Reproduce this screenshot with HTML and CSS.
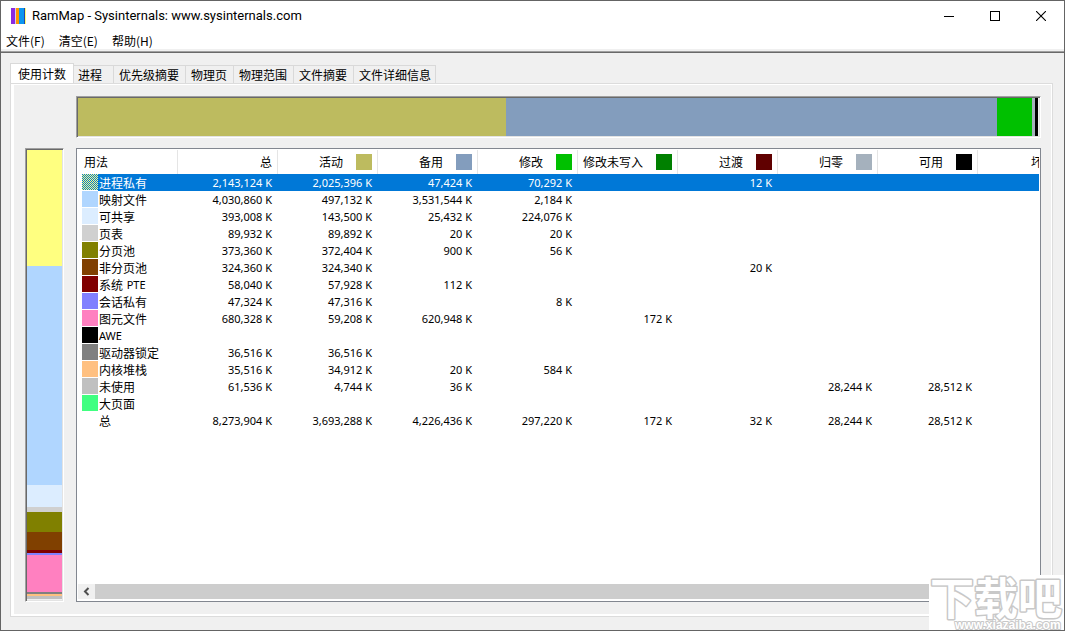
FILE: index.html
```html
<!DOCTYPE html>
<html lang="zh-CN">
<head>
<meta charset="utf-8">
<title>RamMap - Sysinternals: www.sysinternals.com</title>
<link rel="stylesheet" href="styles.css">
</head>
<body>
<div class="window">
  <header class="titlebar">
    <svg class="app-icon" width="16" height="16" viewBox="0 0 16 16" shape-rendering="crispEdges" aria-hidden="true">
      <path fill="#8a2be2" d="M0 0h4v16H0z"/><path fill="#ff9800" d="M5 0h3v16H5z"/><path fill="#d8c8f0" d="M4 0h1v16H4z"/><path fill="#0c96f0" d="M8 0h5v16H8z"/><path fill="#2344a8" d="M13 0h1v16h-1z"/><path fill="#ffff70" d="M14 0h1v16h-1z"/>
    </svg>
    <h1 class="title">RamMap - Sysinternals: www.sysinternals.com</h1>
    <div class="window-buttons">
      <button class="window-button" aria-label="最小化"><svg width="10" height="10" shape-rendering="crispEdges"><path d="M0 5.5h10" stroke="#000"/></svg></button>
      <button class="window-button" aria-label="最大化"><svg width="10" height="10" shape-rendering="crispEdges"><path d="M.5 .5h9v9h-9z" fill="none" stroke="#000"/></svg></button>
      <button class="window-button" aria-label="关闭"><svg width="10" height="10"><path d="M0 0l10 10M10 0L0 10" stroke="#000" stroke-width="1.1"/></svg></button>
    </div>
  </header>
  <nav class="menubar">
    <button class="menu">文件(F)</button>
    <button class="menu">清空(E)</button>
    <button class="menu">帮助(H)</button>
  </nav>
  <main class="client">
    <div class="tabs" role="tablist">
      <button class="tab tab-active" role="tab" aria-selected="true">使用计数</button>
      <button class="tab tab-process" role="tab">进程</button>
      <button class="tab" role="tab">优先级摘要</button>
      <button class="tab" role="tab">物理页</button>
      <button class="tab" role="tab">物理范围</button>
      <button class="tab" role="tab">文件摘要</button>
      <button class="tab" role="tab">文件详细信息</button>
    </div>
    <section class="panel">
      <div class="bar state-bar">
        <span class="active" style="flex-grow:428"></span><span class="standby" style="flex-grow:491"></span><span class="modified" style="flex-grow:35"></span><span class="zeroed" style="flex-grow:3"></span><span class="free" style="flex-grow:3"></span>
      </div>
      <div class="bar usage-bar">
        <span class="private" style="flex-grow:116"></span><span class="mapped" style="flex-grow:219"></span><span class="shareable" style="flex-grow:22"></span><span class="pagetable" style="flex-grow:5"></span><span class="paged" style="flex-grow:20"></span><span class="nonpaged" style="flex-grow:18"></span><span class="system" style="flex-grow:3"></span><span class="session" style="flex-grow:2"></span><span class="metafile" style="flex-grow:37"></span><span class="locked" style="flex-grow:2"></span><span class="kernel" style="flex-grow:2"></span><span class="unused" style="flex-grow:3"></span>
      </div>
      <div class="list">
        <div class="list-view">
        <table class="usage">
          <thead><tr>
            <th>用法</th>
            <th>总</th>
            <th><span class="head">活动<i class="swatch active"></i></span></th>
            <th><span class="head">备用<i class="swatch standby"></i></span></th>
            <th><span class="head">修改<i class="swatch modified"></i></span></th>
            <th><span class="head">修改未写入<i class="swatch nowrite"></i></span></th>
            <th><span class="head">过渡<i class="swatch transition"></i></span></th>
            <th><span class="head">归零<i class="swatch zeroed"></i></span></th>
            <th><span class="head">可用<i class="swatch free"></i></span></th>
            <th><span class="head">坏<i class="swatch"></i></span></th>
          </tr></thead>
          <tbody>
            <tr class="selected"><td><span class="name"><i class="swatch checker"></i>进程私有</span></td><td>2,143,124 K</td><td>2,025,396 K</td><td>47,424 K</td><td>70,292 K</td><td></td><td>12 K</td><td></td><td></td><td></td></tr>
            <tr><td><span class="name"><i class="swatch mapped"></i>映射文件</span></td><td>4,030,860 K</td><td>497,132 K</td><td>3,531,544 K</td><td>2,184 K</td><td></td><td></td><td></td><td></td><td></td></tr>
            <tr><td><span class="name"><i class="swatch shareable"></i>可共享</span></td><td>393,008 K</td><td>143,500 K</td><td>25,432 K</td><td>224,076 K</td><td></td><td></td><td></td><td></td><td></td></tr>
            <tr><td><span class="name"><i class="swatch pagetable"></i>页表</span></td><td>89,932 K</td><td>89,892 K</td><td>20 K</td><td>20 K</td><td></td><td></td><td></td><td></td><td></td></tr>
            <tr><td><span class="name"><i class="swatch paged"></i>分页池</span></td><td>373,360 K</td><td>372,404 K</td><td>900 K</td><td>56 K</td><td></td><td></td><td></td><td></td><td></td></tr>
            <tr><td><span class="name"><i class="swatch nonpaged"></i>非分页池</span></td><td>324,360 K</td><td>324,340 K</td><td></td><td></td><td></td><td>20 K</td><td></td><td></td><td></td></tr>
            <tr><td><span class="name"><i class="swatch system"></i>系统 <span class="latin">PTE</span></span></td><td>58,040 K</td><td>57,928 K</td><td>112 K</td><td></td><td></td><td></td><td></td><td></td><td></td></tr>
            <tr><td><span class="name"><i class="swatch session"></i>会话私有</span></td><td>47,324 K</td><td>47,316 K</td><td></td><td>8 K</td><td></td><td></td><td></td><td></td><td></td></tr>
            <tr><td><span class="name"><i class="swatch metafile"></i>图元文件</span></td><td>680,328 K</td><td>59,208 K</td><td>620,948 K</td><td></td><td>172 K</td><td></td><td></td><td></td><td></td></tr>
            <tr><td><span class="name"><i class="swatch free"></i><span class="latin">AWE</span></span></td><td></td><td></td><td></td><td></td><td></td><td></td><td></td><td></td><td></td></tr>
            <tr><td><span class="name"><i class="swatch locked"></i>驱动器锁定</span></td><td>36,516 K</td><td>36,516 K</td><td></td><td></td><td></td><td></td><td></td><td></td><td></td></tr>
            <tr><td><span class="name"><i class="swatch kernel"></i>内核堆栈</span></td><td>35,516 K</td><td>34,912 K</td><td>20 K</td><td>584 K</td><td></td><td></td><td></td><td></td><td></td></tr>
            <tr><td><span class="name"><i class="swatch unused"></i>未使用</span></td><td>61,536 K</td><td>4,744 K</td><td>36 K</td><td></td><td></td><td></td><td>28,244 K</td><td>28,512 K</td><td></td></tr>
            <tr><td><span class="name"><i class="swatch large"></i>大页面</span></td><td></td><td></td><td></td><td></td><td></td><td></td><td></td><td></td><td></td></tr>
            <tr><td><span class="name"><i class="swatch"></i>总</span></td><td>8,273,904 K</td><td>3,693,288 K</td><td>4,226,436 K</td><td>297,220 K</td><td>172 K</td><td>32 K</td><td>28,244 K</td><td>28,512 K</td><td></td></tr>
          </tbody>
        </table>
        </div>
        <div class="scrollbar">
          <button class="scroll-left" aria-label="向左滚动"><svg width="17" height="15"><path d="M10.500 4L7 7.500L10.500 11" fill="none" stroke="#505050" stroke-width="2"/></svg></button>
          <div class="thumb"></div>
        </div>
      </div>
    </section>
  </main>
  <div class="watermark">
    <svg width="136" height="56" viewBox="0 0 136 56">
      <text class="mark-name" x="1" y="40">下载吧</text>
      <text class="mark-url" x="26" y="54">www.xiazaiba.com</text>
    </svg>
  </div>
</div>
</body>
</html>
```
FILE: styles.css
```css
* { box-sizing: border-box; }
body {
  margin: 0;
  background: #f0f0f0;
  color: #000;
  font: 12px/16px "Noto Sans CJK SC", sans-serif;
}
button {
  margin: 0;
  padding: 0;
  border: 0;
  background: none;
  color: inherit;
  font: inherit;
  white-space: nowrap;
}
svg { display: block; }

.window {
  position: relative;
  display: flex;
  flex-direction: column;
  min-height: 100vh;
  border: 1px solid #646464;
  overflow: hidden;
}
.titlebar {
  display: flex;
  align-items: center;
  height: 30px;
  padding-left: 10px;
  background: #fff;
}
.title {
  flex: 1;
  margin: 0 0 0 5px;
  font: 13px/20px Roboto, sans-serif;
  white-space: nowrap;
}
.window-buttons { display: flex; }
.window-button {
  display: grid;
  place-items: center;
  width: 46px;
  height: 30px;
}
.menubar {
  display: flex;
  gap: 14px;
  height: 22px;
  padding: 0 5px 3px;
  background: linear-gradient(#fff 18px, #f0f0f0 18px, #f0f0f0 20px, #a0a0a0 20px, #a0a0a0 21px, #696969 21px);
}
.menu { line-height: 18px; }

.client {
  flex: 1;
  display: flex;
  flex-direction: column;
  padding: 10px 11px 13px 9px;
}
.tabs {
  display: flex;
  align-items: flex-end;
  height: 20px;
}
.tab {
  height: 18px;
  padding: 0 5px;
  border: 1px solid #d9d9d9;
  border-width: 1px 1px 0 0;
  line-height: 17px;
  text-align: left;
}
.tab + .tab + .tab { padding: 0 6px 0 5px; }
.tab + .tab:last-child { padding: 0 4px 0 5px; }
.tab-active {
  z-index: 1;
  height: 20px;
  padding: 0 7px;
  border-left-width: 1px;
  background: #fff;
}
.tab-process { width: 40px; padding-left: 4px; }
.panel {
  flex: 1;
  display: grid;
  grid-template: 42px 1fr / 39px 1fr;
  gap: 10px 12px;
  padding: 12px 11px 14px 14px;
  border: 1px solid #dcdcdc;
  box-shadow: inset 3px 0 #fff, inset 0 1px #fff, inset -1px -2px #fff;
}
.bar {
  display: flex;
  border: 1px solid;
  border-color: #a0a0a0 #fff #fff #a0a0a0;
  box-shadow: inset 1px 1px #696969, inset -1px -1px #e3e3e3;
  padding: 1px;
}
.state-bar { grid-column: 2; padding-right: 2px; }
.usage-bar { flex-direction: column; padding-bottom: 2px; }
.bar span { flex-basis: 0; }

.list {
  display: flex;
  flex-direction: column;
  min-width: 0;
  padding: 0 1px 1px;
  border: 1px solid #828790;
  background: #fff;
}
.list-view {
  flex: 1;
  overflow: hidden;
}
.usage {
  width: 1000px;
  table-layout: fixed;
  border-collapse: collapse;
}
.usage th, .usage td {
  padding: 0 6px 0 0;
  text-align: right;
  white-space: nowrap;
}
.usage th {
  height: 25px;
  padding-top: 1px;
  background: linear-gradient(#e5e5e5, #e5e5e5) right 1px / 1px 24px no-repeat;
  font-weight: 400;
}
.usage td {
  height: 17px;
  font: 11px/17px "Noto Sans", sans-serif;
}
.usage th:first-child { padding-left: 6px; text-align: left; }
.usage td:first-child { padding: 0 0 0 4px; text-align: left; }
.head {
  display: flex;
  justify-content: flex-end;
  align-items: center;
  gap: 13px;
}
.name {
  display: flex;
  align-items: center;
  gap: 1px;
  height: 17px;
  font: 12px/16px "Noto Sans CJK SC", sans-serif;
  white-space: pre;
}
.latin { font: 11px/16px "Noto Sans", sans-serif; }
.swatch {
  flex: none;
  width: 16px;
  height: 16px;
}
.name .swatch { align-self: flex-start; }
.selected { background: linear-gradient(90deg, #fff 20px, #0078d7 20px); color: #fff; }
.scrollbar {
  display: flex;
  height: 15px;
  margin-bottom: 1px;
  background: #f0f0f0;
}
.thumb {
  flex: 1;
  margin-right: 40px;
  background: #cdcdcd;
}

.active { background: #bdbb5f; }
.standby { background: #839dbd; }
.modified { background: #00c000; }
.nowrite { background: #008000; }
.transition { background: #600000; }
.zeroed { background: #a5b1bd; }
.free { background: #000; }
.private { background: #ffff80; }
.checker { background: conic-gradient(#ffff80 25%, #0078d7 0 50%, #ffff80 0 75%, #0078d7 0) 0 0 / 2px 2px; }
.mapped { background: #b0d6ff; }
.shareable { background: #dcedff; }
.pagetable { background: #d0d0d0; }
.paged { background: #808000; }
.nonpaged { background: #804000; }
.system { background: #800000; }
.session { background: #8080ff; }
.metafile { background: #ff80c0; }
.locked { background: #808080; }
.kernel { background: #ffc080; }
.unused { background: #c0c0c0; }
.large { background: #40ff80; }

.watermark {
  position: absolute;
  right: -1px;
  bottom: -1px;
  z-index: 2;
  background: #fff;
}
.mark-name, .mark-url {
  fill: #fff;
  stroke: #c8c8c8;
  paint-order: stroke;
  stroke-linejoin: round;
}
.mark-name {
  font: 700 44px "Noto Sans CJK SC", sans-serif;
  stroke-width: 3px;
}
.mark-url {
  font: 700 12px "Liberation Sans", sans-serif;
  stroke-width: 2px;
}
```
